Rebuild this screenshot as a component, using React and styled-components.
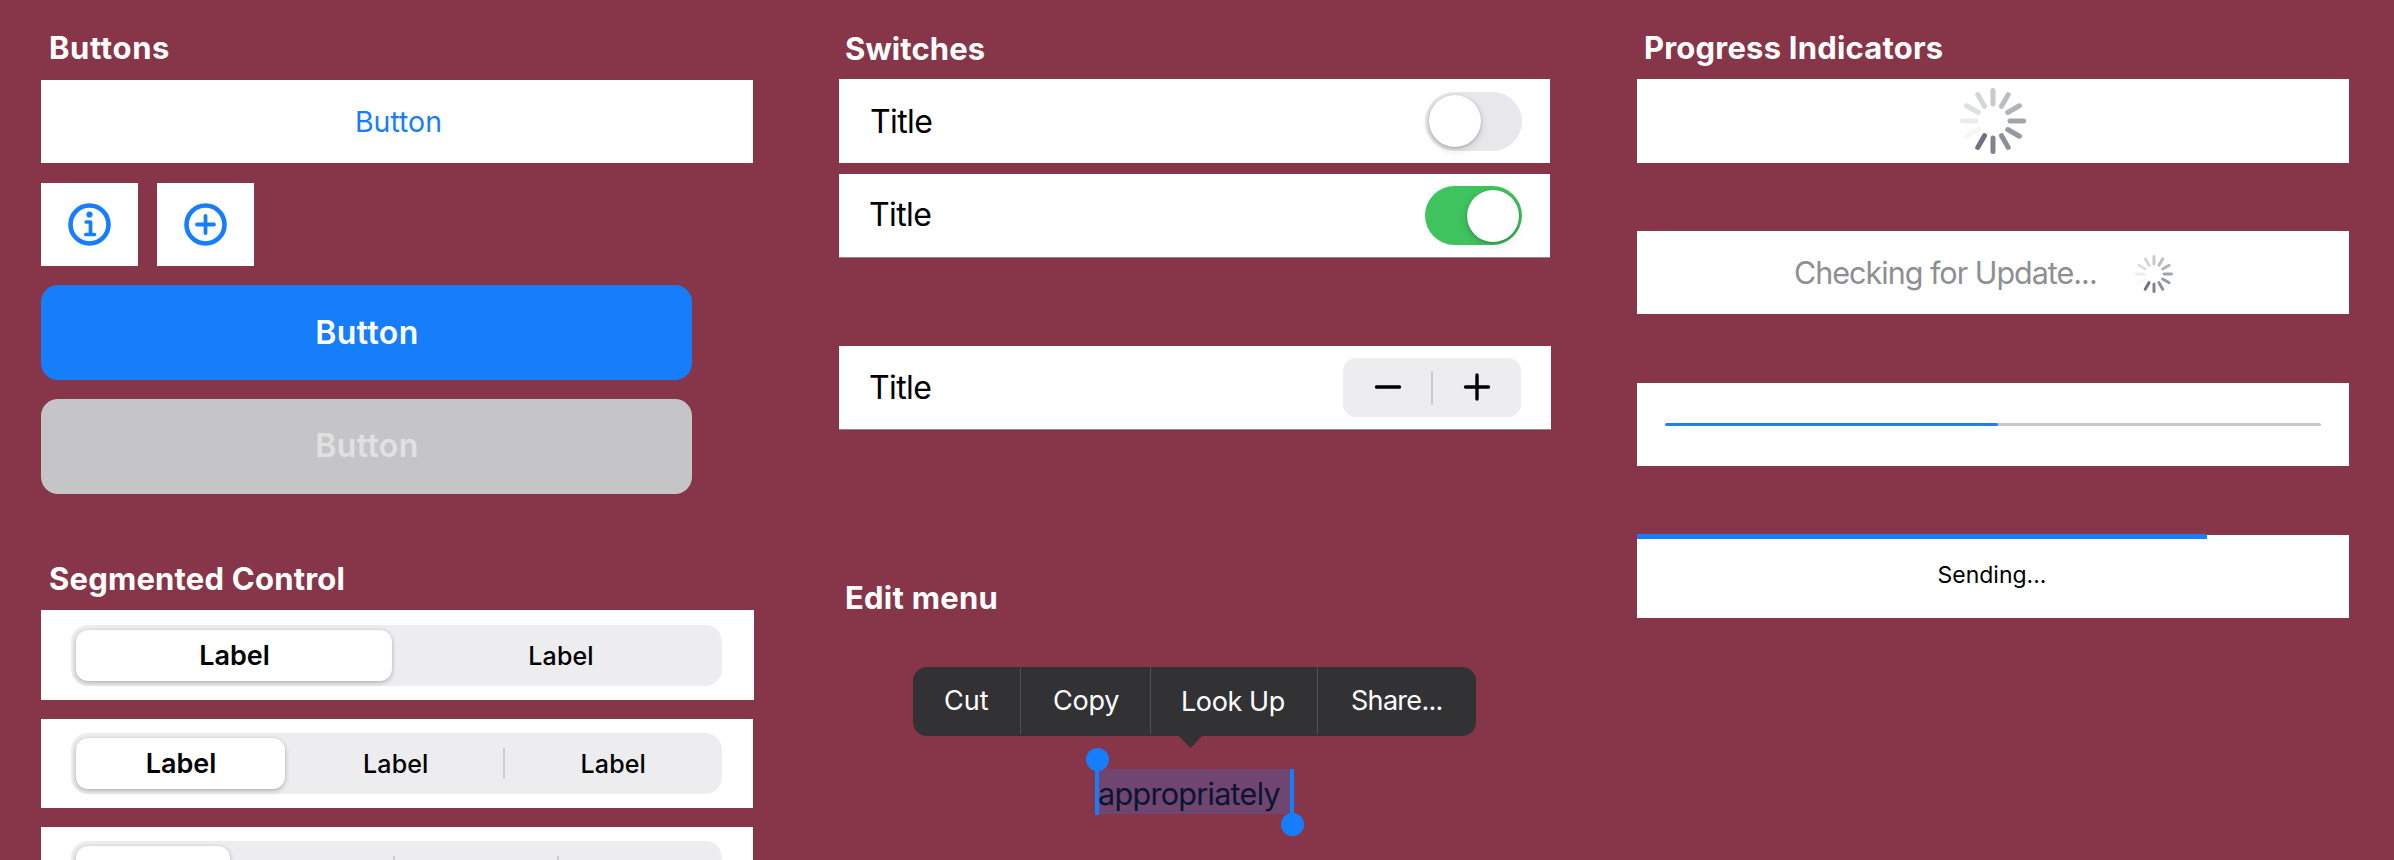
import React from "react";
import styled, { createGlobalStyle } from "styled-components";

const BLUE = "#167efb";

const GlobalStyle = createGlobalStyle`
  * { box-sizing: border-box; }
  html, body { margin: 0; padding: 0; background: #87364a; }
  body {
    height: 860px;
    overflow: hidden;
    font-family: Inter, "Liberation Sans", sans-serif;
    color: #000;
  }
  button { font: inherit; border: 0; padding: 0; background: none; color: inherit; }
`;

const Page = styled.main`
  display: grid;
  grid-template-columns: 712px 712px 712px;
  column-gap: 86px;
  width: 2394px;
  height: 860px;
  padding-left: 41px;
  overflow: hidden;
`;

const Column = styled.section`
  display: flex;
  flex-direction: column;
  align-items: flex-start;
`;

const Heading = styled.h2`
  display: flex;
  align-items: center;
  flex: none;
  margin: 0;
  height: ${(p) => p.$height}px;
  padding-top: ${(p) => p.$top}px;
  padding-left: ${(p) => p.$left}px;
  color: #fff;
  font-size: 31px;
  font-weight: 700;
  letter-spacing: ${(p) => p.$tracking}px;
  white-space: nowrap;
`;

const Card = styled.div`
  display: flex;
  align-items: center;
  flex: none;
  width: ${(p) => p.$width || 712}px;
  height: ${(p) => p.$height || 83}px;
  margin-top: ${(p) => p.$gap || 0}px;
  background: #fff;
`;

const PlainButton = styled.button`
  width: 100%;
  padding-left: 3px;
  color: ${BLUE};
  font-size: 28.5px;
`;

const IconRow = styled.div`
  display: flex;
  flex: none;
  gap: 19px;
  margin-top: 20px;
`;

const IconTile = styled.button`
  display: flex;
  align-items: center;
  justify-content: center;
  width: 97px;
  height: 83px;
  background: #fff;

  svg { display: block; }
`;

const BlockButton = styled.button`
  display: flex;
  align-items: center;
  justify-content: center;
  flex: none;
  width: 651px;
  height: 95px;
  margin-top: 19px;
  padding-left: 1px;
  padding-bottom: ${(p) => (p.disabled ? 2 : 0)}px;
  border-radius: 17px;
  background: ${(p) => (p.disabled ? "#c5c5c7" : BLUE)};
  color: ${(p) => (p.disabled ? "#e1e1e3" : "#fff")};
  font-size: 32px;
  font-weight: 600;
  letter-spacing: 0.4px;
`;

const SegmentTrack = styled.div`
  display: flex;
  align-items: center;
  width: 651px;
  height: 61px;
  margin-left: 30px;
  margin-top: ${(p) => p.$shift || 0}px;
  padding-left: 5px;
  border-radius: 17px;
  background: #ededef;
`;

const Thumb = styled.div`
  display: flex;
  align-items: center;
  justify-content: center;
  width: ${(p) => p.$width}px;
  height: 51px;
  padding-left: 1px;
  padding-bottom: 1px;
  border-radius: 12px;
  background: #fff;
  box-shadow: 0 2px 5px rgba(0, 0, 0, 0.22), 0 0 3px rgba(0, 0, 0, 0.1);
  font-size: 27px;
  font-weight: 600;
`;

const Segment = styled.div`
  flex: 1;
  padding-top: 1px;
  text-indent: ${(p) => p.$nudge || 0}px;
  text-align: center;
  font-size: 25px;
  font-weight: 500;
  letter-spacing: 0.1px;
`;

const SegmentDivider = styled.div`
  width: 2px;
  height: 31px;
  background: #cfcfd3;
`;

const RowTitle = styled.span`
  flex: 1;
  padding-left: ${(p) => p.$left}px;
  padding-bottom: ${(p) => p.$bottom || 0}px;
  font-size: 32px;
  letter-spacing: -0.6px;
`;

const SwitchTrack = styled.div`
  display: flex;
  align-items: center;
  justify-content: ${(p) => (p.$on ? "flex-end" : "flex-start")};
  width: 97px;
  height: 59px;
  margin-right: 28px;
  padding: 0 3px 0 4px;
  border-radius: 30px;
  background: ${(p) => (p.$on ? "#3fc35e" : "#e8e8ea")};
`;

const SwitchKnob = styled.div`
  width: 52px;
  height: 52px;
  border-radius: 50%;
  background: #fff;
  box-shadow: 0 3px 8px rgba(0, 0, 0, 0.14), 0 1px 3px rgba(0, 0, 0, 0.22);
`;

const Stepper = styled.div`
  display: flex;
  align-items: center;
  width: 178px;
  height: 59px;
  margin-right: 30px;
  border-radius: 13px;
  background: #ededef;
`;

const StepperButton = styled.button`
  display: flex;
  align-items: center;
  justify-content: center;
  width: 88px;
  padding-left: ${(p) => p.$nudge || 0}px;
  padding-bottom: 2px;
`;

const StepperDivider = styled.div`
  width: 2px;
  height: 34px;
  background: #cbcbcf;
`;

const RowRule = styled.div`
  flex: none;
  width: ${(p) => p.$width}px;
  height: 1px;
  background: #94828c;
`;

const EditMenu = styled.div`
  position: relative;
  display: flex;
  flex: none;
  width: 563px;
  height: 69px;
  margin-top: 32px;
  margin-left: 74px;
  border-radius: 14px;
  background: #323234;
  color: #fff;
  font-size: 27px;
`;

const MenuArrow = styled.div`
  position: absolute;
  left: 265px;
  top: 68px;
  width: 25px;
  height: 13px;
  background: #323234;
  clip-path: polygon(0 0, 100% 0, 50% 100%);
`;

const MenuItem = styled.button`
  display: flex;
  align-items: center;
  width: ${(p) => p.$width}px;
  height: 67px;
  padding-left: ${(p) => p.$left}px;
  padding-top: ${(p) => p.$top || 0}px;
  letter-spacing: ${(p) => p.$tracking || 0}px;
  white-space: nowrap;

  & + & { border-left: 1px solid #515153; }
`;

const Selection = styled.div`
  position: relative;
  display: flex;
  align-items: center;
  flex: none;
  width: 196px;
  height: 45px;
  margin-top: 33px;
  margin-left: 257px;
  padding-left: 2px;
  padding-top: 4px;
  background: #70456f;
  color: #0b1433;
  font-size: 30.5px;
  letter-spacing: -0.7px;
`;

const Handle = styled.div`
  position: absolute;
  left: ${(p) => (p.$end ? 194 : -1)}px;
  top: 0;
  width: 4px;
  height: 46px;
  background: ${BLUE};

  &::after {
    content: "";
    position: absolute;
    left: -9.5px;
    top: ${(p) => (p.$end ? 44 : -21)}px;
    width: 23px;
    height: 23px;
    border-radius: 50%;
    background: ${BLUE};
  }
`;

const Status = styled.div`
  display: flex;
  align-items: center;
  gap: 38px;
  padding-left: 157px;
  color: #8e8f93;
  font-size: 30.5px;
  letter-spacing: -1px;
  white-space: nowrap;

  svg { margin-top: 3px; }
`;

const Centered = styled.div`
  display: flex;
  justify-content: center;
  width: 100%;
`;

const ProgressTrack = styled.div`
  width: 656px;
  height: 3px;
  margin-left: 28px;
  border-radius: 2px;
  background: #c7c7cc;
  overflow: hidden;
`;

const ProgressFill = styled.div`
  height: 100%;
  border-radius: 2px;
  background: #247fe8;
`;

const SendingCard = styled.div`
  flex: none;
  width: 712px;
  height: 84px;
  margin-top: 68px;
  background: linear-gradient(#87364a 1px, #fff 1px);
`;

const SendingBar = styled.div`
  height: 5px;
  background: ${BLUE};
`;

const SendingLabel = styled.div`
  height: 75px;
  line-height: 73px;
  padding-right: 2px;
  text-align: center;
  font-size: 23px;
`;

const SPOKES = [
  "#c9cace", "#bdbec4", "#b1b3ba", "#a2a4ac", "#9799a2", "#8b8f99",
  "#7f848f", "#6d727e", "#f7f7f8", "#ebebed", "#dedfe1", "#d4d5d8",
];

function Spinner({ size, inner, stroke }) {
  const r = size / 2;
  return (
    <svg width={size} height={size} viewBox={`${-r} ${-r} ${size} ${size}`} strokeLinecap="round">
      {SPOKES.map((color, i) => (
        <line
          key={i}
          y1={-inner - stroke / 2}
          y2={-r + stroke / 2}
          stroke={color}
          strokeWidth={stroke}
          transform={`rotate(${i * 30})`}
        />
      ))}
    </svg>
  );
}

function InfoIcon() {
  return (
    <svg width="43" height="43" viewBox="-21.5 -21.5 43 43" fill="none" stroke={BLUE}>
      <circle r="19" strokeWidth="4.6" />
      <circle cx="0" cy="-10" r="3.1" fill={BLUE} stroke="none" />
      <path d="M-3.3 -2.5H1V10M-3.7 10H5" strokeWidth="3.7" strokeLinecap="round" strokeLinejoin="round" />
    </svg>
  );
}

function AddIcon() {
  return (
    <svg width="43" height="43" viewBox="-21.5 -21.5 43 43" fill="none" stroke={BLUE}>
      <circle r="19" strokeWidth="4.6" />
      <path d="M-8.5 0H8.5M0 -8.5V8.5" strokeWidth="3.8" strokeLinecap="round" />
    </svg>
  );
}

function StepIcon({ plus }) {
  return (
    <svg width="28" height="28" viewBox="-14 -14 28 28" stroke="#000" strokeWidth="3.4" strokeLinecap="round">
      <path d={plus ? "M-11.5 0H11.5M0 -12V12" : "M-11.5 0H11.5"} />
    </svg>
  );
}

export default function App() {
  return (
    <>
      <GlobalStyle />
      <Page>
        <Column>
          <Heading $height={80} $top={15} $left={8} $tracking={0.6}>Buttons</Heading>
          <Card>
            <PlainButton>Button</PlainButton>
          </Card>
          <IconRow>
            <IconTile aria-label="Info"><InfoIcon /></IconTile>
            <IconTile aria-label="Add"><AddIcon /></IconTile>
          </IconRow>
          <BlockButton>Button</BlockButton>
          <BlockButton disabled>Button</BlockButton>

          <Heading $height={116} $top={53} $left={8} $tracking={0.2}>Segmented Control</Heading>
          <Card $width={713} $height={90}>
            <SegmentTrack $shift={1}>
              <Thumb $width={316}>Label</Thumb>
              <Segment $nudge={8}>Label</Segment>
            </SegmentTrack>
          </Card>
          <Card $height={89} $gap={19}>
            <SegmentTrack>
              <Thumb $width={209}>Label</Thumb>
              <Segment $nudge={4}>Label</Segment>
              <SegmentDivider />
              <Segment>Label</Segment>
            </SegmentTrack>
          </Card>
          <Card $height={89} $gap={19}>
            <SegmentTrack>
              <Thumb $width={154} />
              <Segment />
              <SegmentDivider />
              <Segment />
              <SegmentDivider />
              <Segment />
            </SegmentTrack>
          </Card>
        </Column>

        <Column>
          <Heading $height={79} $top={18} $left={6} $tracking={0.1}>Switches</Heading>
          <Card $width={711} $height={84}>
            <RowTitle $left={31}>Title</RowTitle>
            <SwitchTrack><SwitchKnob /></SwitchTrack>
          </Card>
          <Card $width={711} $gap={11}>
            <RowTitle $left={30} $bottom={3}>Title</RowTitle>
            <SwitchTrack $on><SwitchKnob /></SwitchTrack>
          </Card>
          <RowRule $width={711} />
          <Card $gap={88}>
            <RowTitle $left={30}>Title</RowTitle>
            <Stepper>
              <StepperButton aria-label="Decrease" $nudge={2}><StepIcon /></StepperButton>
              <StepperDivider />
              <StepperButton aria-label="Increase"><StepIcon plus /></StepperButton>
            </Stepper>
          </Card>
          <RowRule $width={712} />

          <Heading $height={205} $top={130} $left={6} $tracking={0.25}>Edit menu</Heading>
          <EditMenu>
            <MenuItem $width={107} $left={31}>Cut</MenuItem>
            <MenuItem $width={130} $left={32} $tracking={-0.2}>Copy</MenuItem>
            <MenuItem $width={167} $left={30} $top={2} $tracking={-0.4}>Look Up</MenuItem>
            <MenuItem $width={159} $left={33} $tracking={-0.7}>Share...</MenuItem>
            <MenuArrow />
          </EditMenu>
          <Selection>
            appropriately
            <Handle />
            <Handle $end />
          </Selection>
        </Column>

        <Column>
          <Heading $height={79} $top={16} $left={7} $tracking={0.2}>Progress Indicators</Heading>
          <Card $height={84}>
            <Centered><Spinner size={66} inner={14.5} stroke={5} /></Centered>
          </Card>
          <Card $gap={68}>
            <Status>
              Checking for Update...
              <Spinner size={38} inner={8.5} stroke={3} />
            </Status>
          </Card>
          <Card $gap={69}>
            <ProgressTrack>
              <ProgressFill style={{ width: "50.8%" }} />
            </ProgressTrack>
          </Card>
          <SendingCard>
            <SendingBar style={{ width: "80.1%" }} />
            <SendingLabel>Sending...</SendingLabel>
          </SendingCard>
        </Column>
      </Page>
    </>
  );
}
